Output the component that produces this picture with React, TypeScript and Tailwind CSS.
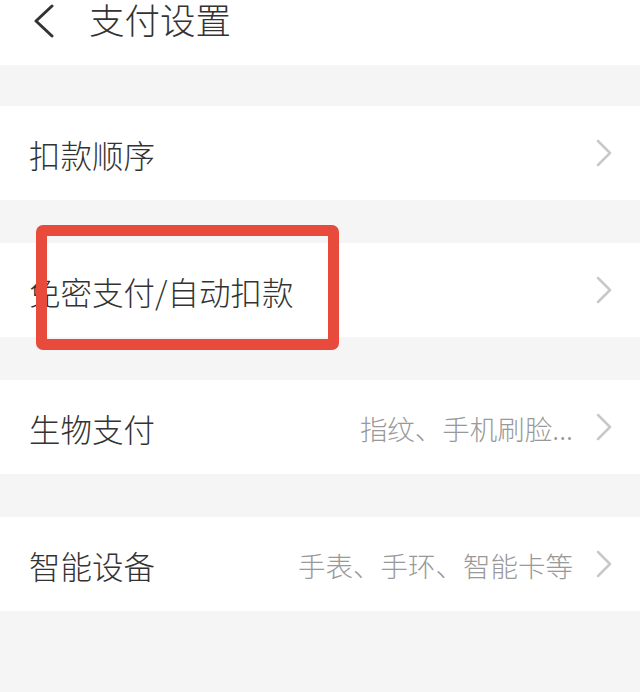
import type { ReactNode } from "react";

type Row = {
  title: string;
  hint?: string;
};

const groups: Row[] = [
  { title: "扣款顺序" },
  { title: "免密支付/自动扣款" },
  { title: "生物支付", hint: "指纹、手机刷脸..." },
  { title: "智能设备", hint: "手表、手环、智能卡等" },
];

const font = { fontFamily: '"Noto Sans CJK SC", "Noto Sans", sans-serif' };

export default function App() {
  return (
    <div className="relative h-[692px] w-[640px] overflow-hidden bg-[#f5f5f5]" style={font}>
      <header className="flex h-[65px] items-start bg-white">
        <span className="ml-[31px] mt-[4px] text-[#333]">
          <BackIcon />
        </span>
        <h1 className="ml-[32px] text-[35.5px] font-light leading-[38px] text-[#333]">支付设置</h1>
      </header>

      <div className="flex flex-col gap-[43px] pt-[41px]">
        {groups.map((row) => (
          <SettingRow key={row.title} hint={row.hint}>
            {row.title}
          </SettingRow>
        ))}
      </div>

      {/* highlight box drawn over the second row */}
      <div className="pointer-events-none absolute left-[36px] top-[225px] h-[125px] w-[303px] rounded-[7px] border-[11px] border-[#e84a3c]" />
    </div>
  );
}

function SettingRow({ children, hint }: { children: ReactNode; hint?: string }) {
  return (
    <div className="flex h-[94px] items-center bg-white pl-[29px] pr-[27px]">
      <span className="mt-[4px] flex-1 text-[31.5px] font-light leading-none text-[#333]">{children}</span>
      {hint && <span className="mr-[22px] mt-[4px] text-[27.5px] font-light leading-none text-[#999]">{hint}</span>}
      <ChevronIcon />
    </div>
  );
}

function BackIcon() {
  return (
    <svg width="26" height="34" viewBox="0 0 26 34" fill="none">
      <path d="M21 2 L5 17 L21 32" stroke="currentColor" strokeWidth="3" strokeLinecap="round" strokeLinejoin="round" />
    </svg>
  );
}

function ChevronIcon() {
  return (
    <svg width="18" height="30" viewBox="0 0 18 30" fill="none">
      <path d="M3 3 L15 15 L3 27" stroke="#c8c8c8" strokeWidth="2.5" strokeLinecap="round" strokeLinejoin="round" />
    </svg>
  );
}
